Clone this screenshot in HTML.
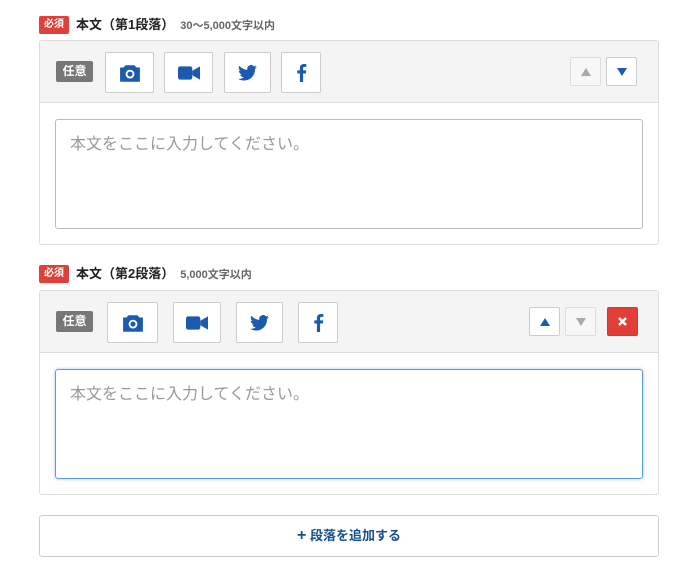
<!DOCTYPE html><html><head><meta charset="utf-8"><style>
*{box-sizing:border-box}body{margin:0;width:689px;height:573px;background:#fff;font-family:"Liberation Sans","Noto Sans CJK JP",sans-serif;position:relative;overflow:hidden}
.abs{position:absolute}
.req{background:#e0403a;color:#fff;font-size:10px;font-weight:bold;border-radius:2px;height:18px;line-height:18px;padding:0 4px;width:30px;text-align:center}
.lbl{font-size:13px;font-weight:bold;color:#222;line-height:18px}
.lbl small{font-size:11px;color:#666;margin-left:6px}
.panel{border:1px solid #ddd;border-radius:3px;left:39px;width:620px;height:205px}
.hd{position:absolute;left:0;top:0;right:0;height:62px;background:#f4f4f4;border-bottom:1px solid #ddd}
.opt{background:#777;color:#fff;font-size:12px;font-weight:bold;border-radius:2px;width:37px;height:21px;line-height:21px;text-align:center}
.btn{background:#fff;border:1px solid #ccc;border-radius:2px;display:flex;align-items:center;justify-content:center}
.sm{background:#fff;border:1px solid #ccc;border-radius:2px;width:31px;height:29px;display:flex;align-items:center;justify-content:center}
.ta{border:1px solid #bbb;border-radius:3px;left:15px;width:588px;height:110px;padding:10px 14px;color:#999;font-size:16px}
</style></head><body>
<div class="abs req" style="left:39px;top:16px">必須</div>
<div class="abs lbl" style="left:76px;top:16px">本文（第1段落）<small>30〜5,000文字以内</small></div>
<div class="abs panel" style="top:40px">
<div class="hd">
<div class="abs opt" style="left:16px;top:20px">任意</div>
<div class="abs btn" style="left:65px;top:11px;width:49px;height:41px"><svg width="22" height="18" viewBox="0 0 20 16"><path d="M6 1h8l2 2h3v13H1V3h3z" fill="#1a5bb0"/><circle cx="10" cy="9" r="4" fill="#fff"/><circle cx="10" cy="9" r="2.3" fill="#1a5bb0"/></svg></div>
<div class="abs btn" style="left:124px;top:11px;width:49px;height:41px"><svg width="22" height="16" viewBox="0 0 20 14"><rect x="0" y="1" width="13" height="12" rx="2" fill="#1a5bb0"/><path d="M13 5l7-4v12l-7-4z" fill="#1a5bb0"/></svg></div>
<div class="abs btn" style="left:184px;top:11px;width:47px;height:41px"><svg width="19" height="16" viewBox="0 0 24 20"><path d="M24 2.4a10 10 0 0 1-2.8.8A5 5 0 0 0 23.3.4a10 10 0 0 1-3.1 1.2A4.9 4.9 0 0 0 11.8 6 14 14 0 0 1 1.7.9a4.9 4.9 0 0 0 1.5 6.6A5 5 0 0 1 1 6.9a4.9 4.9 0 0 0 3.9 4.9 5 5 0 0 1-2.2.1 4.9 4.9 0 0 0 4.6 3.4A9.9 9.9 0 0 1 0 17.3 14 14 0 0 0 7.5 19.5c9.1 0 14-7.5 14-14v-.6A10 10 0 0 0 24 2.4z" fill="#1a5bb0"/></svg></div>
<div class="abs btn" style="left:241px;top:11px;width:40px;height:41px"><svg width="11" height="19" viewBox="0 0 10 18"><path d="M6.5 18V10h2.6l.4-3H6.5V5.2c0-.9.3-1.5 1.5-1.5H9.6V1.1A20 20 0 0 0 7.3 1C5 1 3.5 2.4 3.5 4.9V7H1v3h2.5v8z" fill="#1a5bb0"/></svg></div>
<div class="abs sm" style="left:530px;top:16px;background:#f7f7f7;border-color:#ddd"><svg width="10" height="8"><path d="M5 0l5 8H0z" fill="#aaa"/></svg></div>
<div class="abs sm" style="left:566px;top:16px"><svg width="10" height="8"><path d="M0 0h10L5 8z" fill="#1a5bb0"/></svg></div>
</div>
<div class="abs ta" style="top:78px">本文をここに入力してください。</div>
</div>
<div class="abs req" style="left:39px;top:265px">必須</div>
<div class="abs lbl" style="left:76px;top:265px">本文（第2段落）<small>5,000文字以内</small></div>
<div class="abs panel" style="top:290px">
<div class="hd">
<div class="abs opt" style="left:16px;top:20px">任意</div>
<div class="abs btn" style="left:67px;top:11px;width:51px;height:41px"><svg width="22" height="18" viewBox="0 0 20 16"><path d="M6 1h8l2 2h3v13H1V3h3z" fill="#1a5bb0"/><circle cx="10" cy="9" r="4" fill="#fff"/><circle cx="10" cy="9" r="2.3" fill="#1a5bb0"/></svg></div>
<div class="abs btn" style="left:133px;top:11px;width:48px;height:41px"><svg width="22" height="16" viewBox="0 0 20 14"><rect x="0" y="1" width="13" height="12" rx="2" fill="#1a5bb0"/><path d="M13 5l7-4v12l-7-4z" fill="#1a5bb0"/></svg></div>
<div class="abs btn" style="left:196px;top:11px;width:47px;height:41px"><svg width="19" height="16" viewBox="0 0 24 20"><path d="M24 2.4a10 10 0 0 1-2.8.8A5 5 0 0 0 23.3.4a10 10 0 0 1-3.1 1.2A4.9 4.9 0 0 0 11.8 6 14 14 0 0 1 1.7.9a4.9 4.9 0 0 0 1.5 6.6A5 5 0 0 1 1 6.9a4.9 4.9 0 0 0 3.9 4.9 5 5 0 0 1-2.2.1 4.9 4.9 0 0 0 4.6 3.4A9.9 9.9 0 0 1 0 17.3 14 14 0 0 0 7.5 19.5c9.1 0 14-7.5 14-14v-.6A10 10 0 0 0 24 2.4z" fill="#1a5bb0"/></svg></div>
<div class="abs btn" style="left:258px;top:11px;width:40px;height:41px"><svg width="11" height="19" viewBox="0 0 10 18"><path d="M6.5 18V10h2.6l.4-3H6.5V5.2c0-.9.3-1.5 1.5-1.5H9.6V1.1A20 20 0 0 0 7.3 1C5 1 3.5 2.4 3.5 4.9V7H1v3h2.5v8z" fill="#1a5bb0"/></svg></div>
<div class="abs sm" style="left:489px;top:16px"><svg width="10" height="8"><path d="M5 0l5 8H0z" fill="#1a5bb0"/></svg></div>
<div class="abs sm" style="left:525px;top:16px;background:#f7f7f7;border-color:#ddd"><svg width="10" height="8"><path d="M0 0h10L5 8z" fill="#aaa"/></svg></div>
<div class="abs sm" style="left:567px;top:16px;background:#e23e38;border-color:#d33"><svg width="9" height="9"><path d="M1 1l7 7M8 1L1 8" stroke="#fff" stroke-width="2.4"/></svg></div>
</div>
<div class="abs ta" style="top:78px;border-color:#5b9ee0;box-shadow:0 0 3px rgba(80,150,230,.5)">本文をここに入力してください。</div>
</div>
<div class="abs" style="left:39px;top:515px;width:620px;height:42px;border:1px solid #ccc;border-radius:3px;text-align:center;line-height:40px;font-size:13px;font-weight:bold;color:#1a4f8f"><span style="font-size:16px">+</span> 段落を追加する</div>
</body></html>
